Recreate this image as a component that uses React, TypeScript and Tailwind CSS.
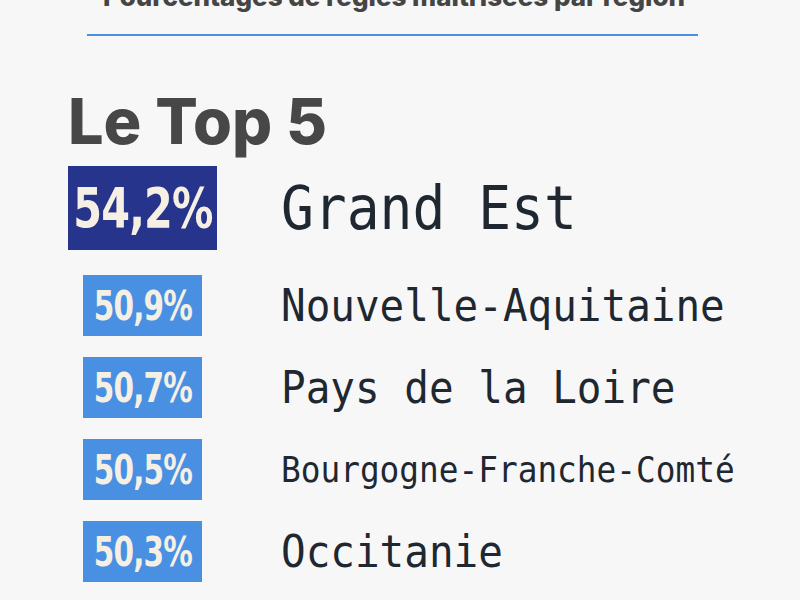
const rows = [
  { pct: "50,9%", name: "Nouvelle-Aquitaine", size: "text-[45px]" },
  { pct: "50,7%", name: "Pays de la Loire", size: "text-[45px]" },
  { pct: "50,5%", name: "Bourgogne-Franche-Comté", size: "text-[36px]" },
  { pct: "50,3%", name: "Occitanie", size: "text-[45px]" },
];

const App = () => {
  return (
    <div className="w-[800px] h-[600px] overflow-hidden bg-[#f7f7f7] text-[#1f2730]">
      <h1 className="-mt-[18px] text-center text-[26px] font-extrabold text-[#454545] font-['Inter',sans-serif] leading-[30px] pr-[12px] whitespace-nowrap">
        Pourcentages de régies maîtrisées par région
      </h1>
      <div className="ml-[87px] mt-[22px] w-[611px] h-[2px] bg-[#4a90e2]" />

      <h2 className="ml-[68px] mt-[50px] text-[63px] leading-[70px] font-extrabold text-[#474747] font-['Inter',sans-serif]">
        Le Top 5
      </h2>

      <div className="ml-[68px] mt-[10px] flex flex-col gap-[21px]">
        <div className="grid grid-cols-[149px_1fr] gap-x-16 items-center mb-[4px]">
          <div className="h-[84px] bg-[#27348b] flex items-center justify-center">
            <span className="text-[#f6f0e4] text-[56px] leading-none font-bold font-['DejaVu_Sans_Condensed','DejaVu_Sans',sans-serif] scale-x-[0.82] tracking-[-1px]">
              54,2%
            </span>
          </div>
          <span className="text-[60px] leading-none font-['DejaVu_Sans_Mono',monospace] scale-x-[0.91] origin-left whitespace-nowrap">
            Grand Est
          </span>
        </div>

        {rows.map((r) => (
          <div key={r.pct} className="grid grid-cols-[149px_1fr] gap-x-16 items-center">
            <div className="mx-auto w-[119px] h-[61px] bg-[#4a90e2] flex items-center justify-center">
              <span className="text-[#f6f0e4] text-[40px] leading-none font-bold font-['DejaVu_Sans_Condensed','DejaVu_Sans',sans-serif] scale-x-[0.82] tracking-[-1px]">
                {r.pct}
              </span>
            </div>
            <span className={`${r.size} leading-none font-['DejaVu_Sans_Mono',monospace] scale-x-[0.91] origin-left whitespace-nowrap`}>
              {r.name}
            </span>
          </div>
        ))}
      </div>
    </div>
  );
};

export default App;
